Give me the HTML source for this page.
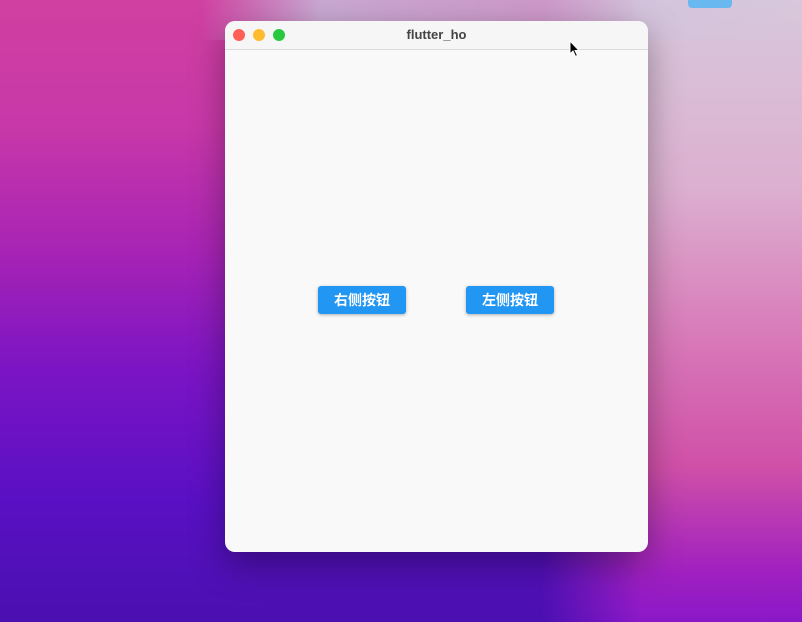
<!DOCTYPE html>
<html><head><meta charset="utf-8"><style>
html,body{margin:0;width:802px;height:622px;overflow:hidden}
body{position:relative;font-family:"Liberation Sans","Noto Sans CJK SC",sans-serif;
background:linear-gradient(180deg,#d040a0 0%,#c838a8 20%,#a824b4 40%,#7a14c4 60%,#5a10c4 80%,#4a10b0 100%);}
.bgr{position:absolute;left:540px;top:0;width:262px;height:622px;background:linear-gradient(180deg,#d8c8dc 0%,#dcb0d0 30%,#d878b8 55%,#d050a8 75%,#a020c0 92%,#8a18c8 100%);
-webkit-mask-image:linear-gradient(90deg,transparent 0,#000 100px);mask-image:linear-gradient(90deg,transparent 0,#000 100px)}
.top{position:absolute;left:200px;top:0;width:602px;height:40px;background:linear-gradient(90deg,rgba(190,150,200,0),rgba(200,180,215,.9) 20%,rgba(210,195,220,.6) 80%,rgba(216,200,220,0));}
.win{position:absolute;left:225px;top:21px;width:423px;height:531px;background:#f9f9f9;border-radius:10px;box-shadow:0 12px 35px rgba(0,0,0,.35);overflow:hidden}
.tb{height:28px;border-bottom:1px solid #dcdcdc;position:relative;background:#f6f6f6}
.dot{position:absolute;top:8px;width:12px;height:12px;border-radius:50%}
.title{position:absolute;left:0;right:0;top:6px;text-align:center;font-weight:bold;font-size:13px;color:#444}
.btn{position:absolute;top:265px;width:88px;height:28px;background:#2196f3;border-radius:3px;color:#fff;font-weight:bold;font-size:14px;text-align:center;line-height:28px;box-shadow:0 1px 3px rgba(0,0,0,.3)}
</style></head><body>
<div class="bgr"></div>
<div class="top"></div>
<div style="position:absolute;left:688px;top:0;width:44px;height:8px;background:#6ab8f0;border-radius:0 0 4px 4px"></div>
<div class="win">
<div class="tb">
<div class="dot" style="left:8px;background:#fe5f57"></div>
<div class="dot" style="left:28px;background:#febc2e"></div>
<div class="dot" style="left:48px;background:#28c840"></div>
<div class="title">flutter_ho</div>
</div>
<div class="btn" style="left:93px">右侧按钮</div>
<div class="btn" style="left:241px">左侧按钮</div>
</div>
<svg style="position:absolute;left:569px;top:40px" width="12" height="18" viewBox="0 0 12 18"><path d="M1 1 L1 14 L4 11 L6.5 16.5 L8.5 15.5 L6 10.5 L10 10.5 Z" fill="#000" stroke="#fff" stroke-width="1"/></svg>
</body></html>
